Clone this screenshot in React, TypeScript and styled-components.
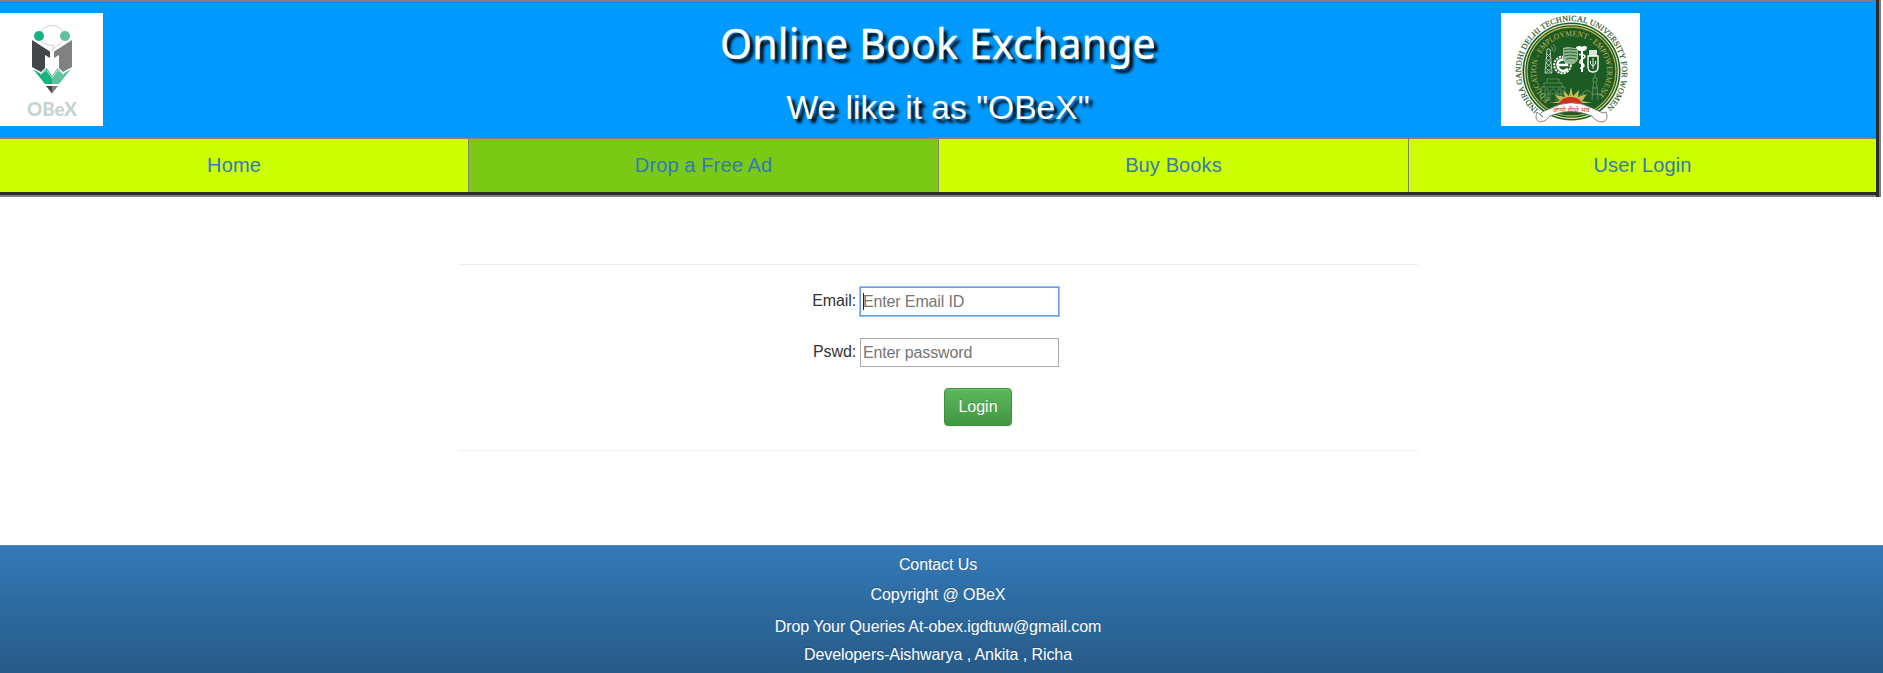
import React from "react";
import styled, { createGlobalStyle } from "styled-components";

const GlobalStyle = createGlobalStyle`
  * { box-sizing: border-box; }
  html, body { margin: 0; padding: 0; background: #fff; overflow: hidden; }
  body {
    font-family: "Liberation Sans", Arial, sans-serif;
    font-size: 16px;
    line-height: 23px;
    color: #333;
  }
`;

const Page = styled.div`
  display: flex;
  flex-direction: column;
  height: 673px;
`;

const Masthead = styled.header`
  width: 1876px;
  border-top: 1px solid gray;
  box-shadow:
    0 3px 0 #2b2b2b, 0 5px 0 gray,
    3px 0 0 #2b2b2b, 3px 5px 0 #2b2b2b,
    5px 0 0 gray, 5px 5px 0 gray;
`;

const Banner = styled.div`
  display: grid;
  grid-template-columns: 375px 1126px 375px;
  height: 138px;
  padding-top: 12px;
  background: #0099ff;
  border-bottom: 1px solid gray;
`;

const LogoTile = styled.div<{ $width: number }>`
  width: ${(p) => p.$width}px;
  height: 113px;
  background: #fff;
  svg { display: block; }
`;

const Titles = styled.div`
  color: #fff;
  text-align: center;
  text-shadow: 4px 4px 3px #000;
`;

const SiteTitle = styled.h1`
  margin: 4px 0 0;
  font: 400 41px/52px "Noto Sans", sans-serif;
  letter-spacing: 0.2px;
  -webkit-text-stroke: 0.4px #fff;
`;

const Tagline = styled.h2`
  margin: 19px 0 0;
  font-size: 33.6px;
  font-weight: 400;
  line-height: 40px;
`;

const Nav = styled.nav`
  display: grid;
  grid-template-columns: 469px 470px 470px 467px;
  height: 53px;
`;

const NavItem = styled.a<{ $active?: boolean; $last?: boolean }>`
  display: flex;
  align-items: center;
  justify-content: center;
  background: ${(p) => (p.$active ? "#7ac915" : "#ccff00")};
  border-right: ${(p) => (p.$last ? "0" : "1px solid gray")};
  color: #337ab7;
  font-size: 20px;
  letter-spacing: 0.12px;
  text-decoration: none;
`;

const LoginForm = styled.form`
  width: 960px;
  height: 187px;
  margin: 72px 0 0 458px;
  padding-top: 21px;
  border-top: 1px solid #eee;
  border-bottom: 1px solid #eee;
`;

const Field = styled.label`
  display: grid;
  grid-template-columns: 398px 200px;
  column-gap: 4px;
  height: 30px;
  margin-bottom: 21px;
  text-align: right;
  line-height: 29px;
  letter-spacing: -0.12px;
`;

const InputWrap = styled.span`
  position: relative;
  display: block;
  height: 30px;
  text-align: left;
  line-height: 0;
`;

const TextInput = styled.input<{ $focused?: boolean }>`
  display: block;
  width: 199px;
  height: 29px;
  margin-top: 1px;
  padding: 1px 2px;
  border: 1px solid ${(p) => (p.$focused ? "#6a9be8" : "#a9a9a9")};
  border-radius: 0;
  box-shadow: ${(p) => (p.$focused ? "0 0 0 1px #9dbff5" : "none")};
  outline: none;
  font: 16px "Liberation Sans", Arial, sans-serif;
  letter-spacing: -0.14px;
  &::placeholder { color: #757575; opacity: 1; }
`;

const Caret = styled.i`
  position: absolute;
  left: 3px;
  top: 7px;
  width: 1px;
  height: 17px;
  background: #222;
`;

const LoginButton = styled.button`
  display: block;
  width: 68px;
  height: 38px;
  margin-left: 486px;
  padding: 0;
  border: 1px solid #3e8f3e;
  border-radius: 4px;
  background: linear-gradient(#5cb85c, #419641);
  box-shadow: inset 0 1px 0 rgba(255, 255, 255, 0.15), 0 1px 1px rgba(0, 0, 0, 0.075);
  color: #fff;
  text-shadow: 0 -1px 0 rgba(0, 0, 0, 0.2);
  font: 16px "Liberation Sans", Arial, sans-serif;
`;

const Footer = styled.footer`
  flex: 1;
  margin-top: 94px;
  padding: 8px 7px 0 0;
  border-top: 1px solid #4a8ac0;
  background: linear-gradient(#337ab7, #265a88);
  color: #fff;
  text-align: center;
  letter-spacing: -0.09px;
  text-shadow: 0 -1px 0 rgba(0, 0, 0, 0.2);
`;

const FooterLine = styled.p<{ $gap: number }>`
  margin: 0 0 ${(p) => p.$gap}px;
  line-height: 21px;
`;

function ObexLogo() {
  return (
    <svg width="103" height="113" viewBox="0 0 103 113">
      <path d="M41 19C44 10.500 60 10.500 63 19M41 28Q46 33 54 32.500L52 37.500L57 32.500Q61 31 63 28" fill="none" stroke="#c6d3d0" strokeWidth="1" />
      <circle cx="39" cy="23" r="5" fill="#18b37d" />
      <circle cx="65" cy="23" r="5" fill="#5fc29d" />
      <path d="M32 27L50 38.500V45L45 42V55L41 59L32 54Z" fill="#43474b" />
      <path d="M72 27L54 38.500V45L59 42V55L63 59L72 54Z" fill="#7f8183" />
      <path d="M33 56L41 61L46.500 55L52 63V71H45Z" fill="#18b37d" />
      <path d="M71 56L63 61L57.500 55L52 63V71H59Z" fill="#5fc29d" />
      <path d="M40 61.500L46.500 57L52 65L57.500 57L64 61.500" fill="none" stroke="#d8f1e7" strokeWidth=".8" />
      <path d="M46 73H52V80.500Z" fill="#43474b" />
      <path d="M58 73H52V80.500Z" fill="#7f8183" />
      <text x="52" y="103" textAnchor="middle" textLength="50" lengthAdjust="spacingAndGlyphs" fontFamily="Lato" fontSize="18" fontWeight="900" fill="#c6d3d0">OBeX</text>
    </svg>
  );
}

function UniversityEmblem() {
  return (
    <svg width="139" height="113" viewBox="0 0 139 113">
      <defs>
        <path id="outerRing" d="M37.600 96.800A50.500 50.500 0 1 1 105.600 94.800" />
        <path id="innerRing" d="M48.400 86.300A35.500 35.500 0 1 1 96.900 82.300" />
      </defs>
      <circle cx="70.500" cy="58.500" r="49" fill="#1c5c24" />
      <circle cx="70.500" cy="58.500" r="46.800" fill="none" stroke="#dfe3b4" strokeWidth="1.300" />
      <circle cx="70.500" cy="58.500" r="44.400" fill="none" stroke="#b9b04a" strokeWidth="1.100" />
      <text fontFamily="Liberation Serif" fontSize="8" fill="#24552b" stroke="#24552b" strokeWidth=".15">
        <textPath href="#outerRing" textLength="242" lengthAdjust="spacingAndGlyphs">INDIRA GANDHI DELHI TECHNICAL UNIVERSITY FOR WOMEN</textPath>
      </text>
      <text fontFamily="Liberation Serif" fontSize="8" fill="#c5b85a">
        <textPath href="#innerRing" textLength="169" lengthAdjust="spacingAndGlyphs">EDUCATION - EMPLOYMENT - EMPOWERMENT</textPath>
      </text>

      {/* transmission tower */}
      <path d="M44 60L46 36H49L51 60M45 40L50 45L45 50L51 55L44 60M50 40L45 45L50 50L44.500 55L51 60M44 60H51" fill="none" stroke="#c7d8c5" strokeWidth=".8" />
      <path d="M50 33Q53 35 51 38M52 31Q56 35 53 39" fill="none" stroke="#8eb08b" strokeWidth=".7" />
      {/* gear and letter */}
      <circle cx="61.500" cy="52" r="8.300" fill="none" stroke="#fff" strokeWidth="2" strokeDasharray="2.200 1" />
      <path d="M57 52H66Q65.500 46.500 61.500 46.500Q56.500 47 56.500 52Q57 58 63 58L67 56" fill="none" stroke="#fff" strokeWidth="2.600" />
      {/* pages */}
      <path d="M62 35Q67 33 73 35H77V47L73 51H67Q62 49 62 46Z" fill="#94b591" />
      <path d="M63 37Q68 35 76 37M63 40Q68 38 76 40M63 43Q69 41 76 43M65 46Q70 44 75 46" fill="none" stroke="#2b6832" strokeWidth="1" />
      {/* caduceus */}
      <path d="M75 34Q79 32 81 34Q83 32 86 34Q86 38 82 38V59H80V38Q76 38 75 34Z" fill="#fff" />
      <path d="M78 42Q81 40 84 43Q84 45 81 46Q78 48 79 50Q83 50 83 53Q81 56 79 55" fill="none" stroke="#fff" strokeWidth="1.400" />
      {/* memory stick */}
      <path d="M88 37H96V43H88Z" fill="#d8e4d6" />
      <path d="M87 43H97V54Q97 59 92 59Q87 59 87 54Z" fill="#1c5c24" stroke="#fff" strokeWidth="1.400" />
      <path d="M92 45V56M89.500 48V51L92 53L94.500 51V48" fill="none" stroke="#fff" strokeWidth=".9" />
      {/* arch gate and minaret */}
      <path d="M40 88V74H43V70H46V66H58V70H61V74H64V88M44 88V76H47V88M57 88V76H60V88M49 88V79Q52 73 55 79V88M42 74H62M46 70H58M40 81H64" fill="none" stroke="#6e9a69" strokeWidth=".7" />
      <path d="M91 87L92.500 69H95.500L97 87M92 69V65H96V69M94 65V60M91 75H97M90 81H98M82 87V80Q86 75 90 80M79 87V82H83M98 82H101V75" fill="none" stroke="#6e9a69" strokeWidth=".8" />
      {/* rising sun */}
      <path d="M70 74L72 83L78 77L77 84L86 81L81 88L91 90H49L59 88L54 82L64 84L62 77L68 83Z" fill="#c8ba56" />
      <path d="M57.500 92Q60 84 69.500 84Q79 84 82 92Z" fill="#cf3020" />
      {/* ribbon */}
      <path d="M36 99Q33 107 39 109Q45 109 49 103Q70 94 91 103Q95 109 102 109Q108 107 105 99L102 100L91 95Q70 84 48 96L41 99Q38 102 42 104Z" fill="#fff" stroke="#5c6d5c" strokeWidth=".8" strokeLinejoin="round" />
      <text x="70" y="98.500" textAnchor="middle" fontFamily="Noto Sans, Noto Sans Devanagari, sans-serif" fontSize="7" fill="#d03a30">अप्पो दीपो भव</text>
    </svg>
  );
}

export default function App() {
  return (
    <Page>
      <GlobalStyle />
      <Masthead>
        <Banner>
          <LogoTile $width={103}><ObexLogo /></LogoTile>
          <Titles>
            <SiteTitle>Online Book Exchange</SiteTitle>
            <Tagline>We like it as "OBeX"</Tagline>
          </Titles>
          <LogoTile $width={139}><UniversityEmblem /></LogoTile>
        </Banner>
        <Nav>
          <NavItem>Home</NavItem>
          <NavItem $active>Drop a Free Ad</NavItem>
          <NavItem>Buy Books</NavItem>
          <NavItem $last>User Login</NavItem>
        </Nav>
      </Masthead>
      <LoginForm>
        <Field>
          Email:
          <InputWrap><TextInput $focused placeholder="Enter Email ID" /><Caret /></InputWrap>
        </Field>
        <Field>
          Pswd:
          <InputWrap><TextInput type="password" placeholder="Enter password" /></InputWrap>
        </Field>
        <LoginButton type="button">Login</LoginButton>
      </LoginForm>
      <Footer>
        <FooterLine $gap={9}>Contact Us</FooterLine>
        <FooterLine $gap={11}>Copyright @ OBeX</FooterLine>
        <FooterLine $gap={7}>Drop Your Queries At-obex.igdtuw@gmail.com</FooterLine>
        <FooterLine $gap={0}>Developers-Aishwarya , Ankita , Richa</FooterLine>
      </Footer>
    </Page>
  );
}
